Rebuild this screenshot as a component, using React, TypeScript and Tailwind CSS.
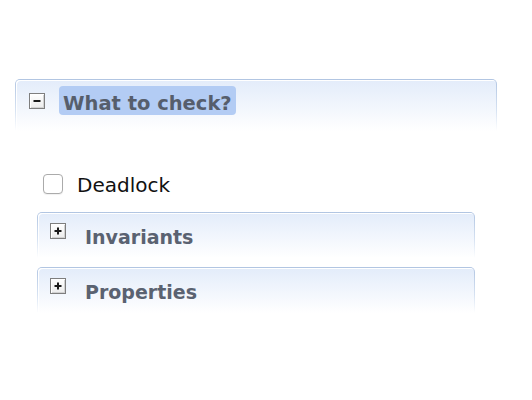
import { ReactNode } from "react";

const FONT = { fontFamily: '"DejaVu Sans", Verdana, sans-serif' };

function ToggleBox({ open }: { open: boolean }) {
  return (
    <span className="flex h-[16px] w-[16px] shrink-0 items-center justify-center border border-[#7e7e7e] bg-linear-to-b from-white to-[#ececec] shadow-[inset_1px_1px_0_#ffffff,inset_-1px_-1px_0_#d2d2d2]">
      <svg width="10" height="10" viewBox="0 0 10 10">
        <rect x="1.5" y="4" width="7" height="2" fill="#1a1a1a" />
        {!open && <rect x="4" y="1.5" width="2" height="7" fill="#1a1a1a" />}
      </svg>
    </span>
  );
}

// header strip with the fading blue frame
function Frame({ height, children }: { height: number; children: ReactNode }) {
  return (
    <div
      className="rounded-t-[5px] bg-linear-to-b from-[#b1c5e2] via-[#d6e2f2] via-60% to-white/0 px-px pt-px"
      style={{ height }}
    >
      <div className="h-full rounded-t-[4px] bg-linear-to-b from-[#e3ecfa] to-white shadow-[inset_1px_1px_0_#ffffff]">
        {children}
      </div>
    </div>
  );
}

function SubSection({ title }: { title: string }) {
  return (
    <Frame height={46}>
      <div className="flex items-start pl-[12px] pt-[10px]">
        <ToggleBox open={false} />
        <span className="ml-[19px] mt-[2px] text-[19px] font-bold leading-[24px] text-[#5a6271]">
          {title}
        </span>
      </div>
    </Frame>
  );
}

export default function App() {
  return (
    <div className="min-h-[400px] w-[532px] bg-white pt-[79px]" style={FONT}>
      <div className="ml-[15px] w-[482px]">
        <Frame height={52}>
          <div className="flex items-start pl-[13px] pt-[6px]">
            <span className="mt-[7px]">
              <ToggleBox open />
            </span>
            <span className="ml-[14px] h-[29px] rounded-[4px] bg-[#b3ccf4] px-[4px] pt-[8px] text-[19.5px] font-bold leading-[20px] text-[#565e6c]">
              What to check?
            </span>
          </div>
        </Frame>

        <div className="px-[22px]">
          <label className="ml-[6px] mt-[42px] flex items-start">
            <span className="mt-px h-[20px] w-[20px] shrink-0 rounded-[4px] border border-[#ababab] bg-white shadow-[0_1px_1px_rgba(0,0,0,0.06)]" />
            <span className="ml-[14px] text-[20px] leading-[24px] text-[#111111]">Deadlock</span>
          </label>

          <div className="mt-[15px]">
            <SubSection title="Invariants" />
          </div>
          <div className="mt-[9px]">
            <SubSection title="Properties" />
          </div>
        </div>
      </div>
    </div>
  );
}
